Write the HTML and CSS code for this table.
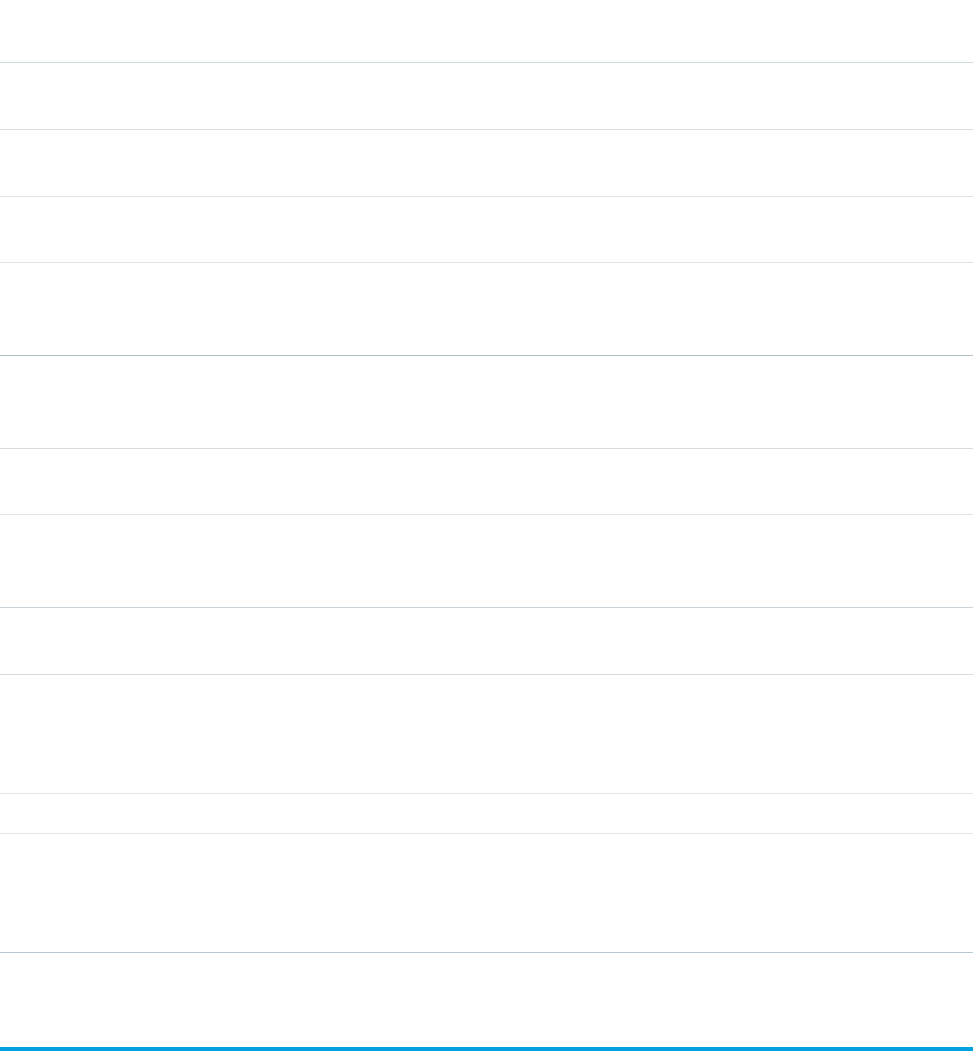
FILE: index.html
```html
<!DOCTYPE html>
<html lang="en">
<head>
<meta charset="utf-8">
<title>List</title>
<link rel="stylesheet" href="styles.css">
</head>
<body>
<div class="page">
  <div class="list">
    <div class="row h62 b-blue"></div>
    <div class="row h66 b-soft"></div>
    <div class="row h66 b-light"></div>
    <div class="row h65 b-light"></div>
    <div class="row h92 b-dark"></div>
    <div class="row h92 b-soft"></div>
    <div class="row h65 b-light"></div>
    <div class="row h92 b-mid"></div>
    <div class="row h66 b-soft"></div>
    <div class="row h118 b-faint"></div>
    <div class="row h39 b-faint"></div>
    <div class="row h118 b-steel"></div>
    <div class="row h94 last"></div>
  </div>
  <div class="accent"></div>
</div>
</body>
</html>
```

FILE: styles.css
```css
html, body {
  margin: 0;
  padding: 0;
  background: #ffffff;
  font-family: "Liberation Sans", Arial, sans-serif;
}
.page {
  width: 973px;
  height: 1051px;
  display: flex;
  flex-direction: column;
  overflow: hidden;
}
.list {
  display: flex;
  flex-direction: column;
}
.row {
  border-bottom: 1px solid #d8dde2;
  flex: none;
}
.row.last { border-bottom: none; }
.h39 { height: 39px; }
.h62 { height: 62px; }
.h65 { height: 65px; }
.h66 { height: 66px; }
.h92 { height: 92px; }
.h94 { height: 94px; }
.h118 { height: 118px; }
.b-blue { border-bottom-color: #cfd9e0; }
.b-soft { border-bottom-color: #d6dce0; }
.b-light { border-bottom-color: #dfe3e5; }
.b-dark { border-bottom-color: #b3c0c8; }
.b-mid { border-bottom-color: #c9d3d9; }
.b-faint { border-bottom-color: #e0e5e8; }
.b-steel { border-bottom-color: #b7c8d5; }
.accent {
  height: 4px;
  background: #00a1df;
  flex: none;
}
```
